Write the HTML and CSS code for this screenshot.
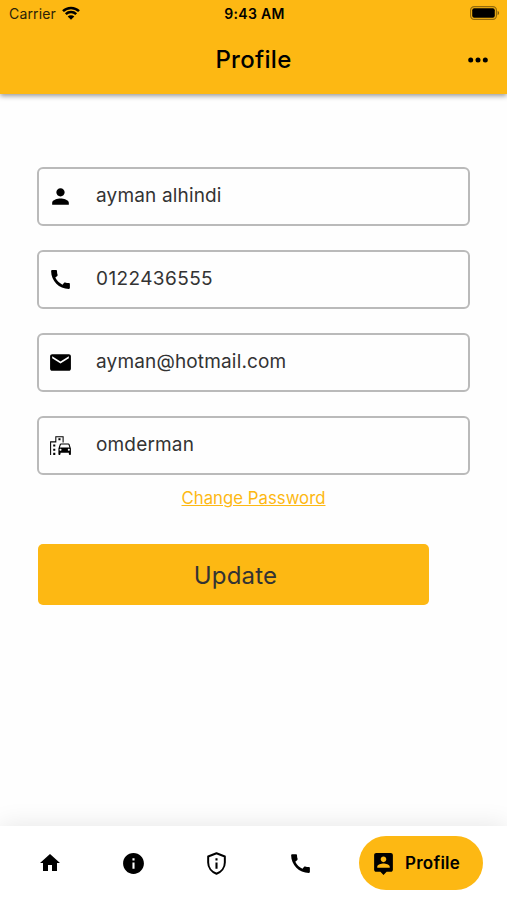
FILE: index.html
```html
<!DOCTYPE html>
<html lang="en">
<head>
    <meta charset="utf-8"/>
    <title>Profile</title>
    <meta name="viewport" content="width=device-width, initial-scale=1.0"/>
    <link rel="stylesheet" href="styles.css">
</head>

<body>
<header class="header">
    <div class="status">
        <div class="carrier">
            <span>Carrier</span>
            <svg class="wifi" viewBox="0 0 18 14">
                <path d="M1 5.2a11.4 11.4 0 0 1 16 0M3.8 8.1a7.4 7.4 0 0 1 10.4 0" fill="none" stroke="#000" stroke-width="2.5"/>
                <path d="M9 13.8L5.7 10.5a4.7 4.7 0 0 1 6.6 0z"/>
            </svg>
        </div>
        <span class="time">9:43 AM</span>
        <svg class="battery" viewBox="0 0 30 14">
            <rect x=".6" y=".6" width="25.8" height="12.8" rx="3.6" fill="none" stroke="#000" stroke-opacity=".42" stroke-width="1.2"/>
            <rect x="2.2" y="2.2" width="22.6" height="9.6" rx="2"/>
            <path d="M27.6 4.8c2 .8 2 3.6 0 4.4z" fill-opacity=".5"/>
        </svg>
    </div>
    <div class="titlebar">
        <h1>Profile</h1>
        <svg class="more" viewBox="0 0 20 6">
            <circle cx="2.7" cy="3" r="2.5"/>
            <circle cx="10" cy="3" r="2.5"/>
            <circle cx="17.3" cy="3" r="2.5"/>
        </svg>
    </div>
</header>

<main class="content">
    <div class="field">
        <svg class="icon" viewBox="0 0 24 24"><path d="M12 12c2.21 0 4-1.79 4-4s-1.79-4-4-4-4 1.79-4 4 1.79 4 4 4zm0 2c-2.67 0-8 1.34-8 4v2h16v-2c0-2.66-5.33-4-8-4z"/></svg>
        <span class="name">ayman alhindi</span>
    </div>
    <div class="field">
        <svg class="icon" viewBox="0 0 24 24"><path d="M20.01 15.38c-1.23 0-2.42-.2-3.53-.56-.35-.12-.74-.03-1.01.24l-1.57 1.97c-2.83-1.35-5.48-3.9-6.89-6.83l1.95-1.66c.27-.28.35-.67.24-1.02-.37-1.11-.56-2.3-.56-3.53 0-.54-.45-.99-.99-.99H4.19C3.65 3 3 3.24 3 3.99 3 13.28 10.73 21 20.01 21c.71 0 .99-.63.99-1.18v-3.45c0-.54-.45-.99-.99-.99z"/></svg>
        <span class="phone">0122436555</span>
    </div>
    <div class="field">
        <svg class="icon" viewBox="0 0 24 24"><path d="M20 4H4c-1.1 0-2 .9-2 2v12c0 1.1.9 2 2 2h16c1.1 0 2-.9 2-2V6c0-1.1-.9-2-2-2zm0 4l-8 5-8-5V6l8 5 8-5v2z"/></svg>
        <span class="email">ayman@hotmail.com</span>
    </div>
    <div class="field">
        <svg class="icon" viewBox="0 0 24 24">
            <path d="M20.57 10.66C20.43 10.26 20.05 10 19.6 10h-7.19c-.46 0-.83.26-.98.66L10 14.77l.01 5.51c0 .38.31.72.69.72h.62c.38 0 .68-.38.68-.76V19h8v1.24c0 .38.31.76.69.76h.61c.38 0 .69-.34.69-.72l.01-1.37v-4.14l-1.43-4.11zM12.41 11h7.19l1.03 3h-9.25l1.03-3zM12 17c-.55 0-1-.45-1-1s.45-1 1-1 1 .45 1 1-.45 1-1 1zm8 0c-.55 0-1-.45-1-1s.45-1 1-1 1 .45 1 1-.45 1-1 1z"/>
            <path d="M14 9h1V3H7v5H2v13h1V9h5V4h6zM5 11h2v2H5zM10 5h2v2h-2zM5 15h2v2H5zM5 19h2v2H5z"/>
        </svg>
        <span class="city">omderman</span>
    </div>
    <a class="change" href="#">Change Password</a>
    <button class="btn">Update</button>
</main>

<nav class="bottomnav">
    <a href="#"><svg class="home" viewBox="0 0 24 24"><path d="M10 20v-6h4v6h5v-8h3L12 3 2 12h3v8z"/></svg></a>
    <a href="#"><svg class="icon" viewBox="0 0 24 24"><path d="M12 2C6.48 2 2 6.48 2 12s4.48 10 10 10 10-4.48 10-10S17.52 2 12 2zm1 15h-2v-6h2v6zm0-8h-2V7h2v2z"/></svg></a>
    <a href="#"><svg class="icon" viewBox="0 0 24 24">
        <path d="M12 2.2L4 5.3V11c0 5 3.4 9.2 8 10.8 4.600-1.600 8-5.800 8-10.800V5.300z" fill="none" stroke="#000" stroke-width="1.9" stroke-linejoin="round"/>
        <path d="M11 11h2v6h-2zM11 7h2v2h-2z"/>
    </svg></a>
    <a href="#"><svg class="icon" viewBox="0 0 24 24"><path d="M20.01 15.38c-1.23 0-2.42-.2-3.53-.56-.35-.12-.74-.03-1.01.24l-1.57 1.97c-2.83-1.35-5.48-3.9-6.89-6.83l1.95-1.66c.27-.28.35-.67.24-1.02-.37-1.11-.56-2.3-.56-3.53 0-.54-.45-.99-.99-.99H4.19C3.65 3 3 3.24 3 3.99 3 13.28 10.73 21 20.01 21c.71 0 .99-.63.99-1.18v-3.45c0-.54-.45-.99-.99-.99z"/></svg></a>
    <a class="active" href="#">
        <svg class="icon" viewBox="0 0 24 24"><path d="M19 2H5c-1.11 0-2 .9-2 2v14c0 1.1.89 2 2 2h4l3 3 3-3h4c1.1 0 2-.9 2-2V4c0-1.1-.9-2-2-2zm-7 3.3c1.49 0 2.7 1.21 2.7 2.7 0 1.49-1.21 2.7-2.7 2.7-1.49 0-2.7-1.21-2.7-2.7 0-1.49 1.21-2.7 2.7-2.7zM18 16H6v-.9c0-2 4-3.1 6-3.1s6 1.1 6 3.1v.9z"/></svg>
        <span>Profile</span>
    </a>
</nav>
</body>
</html>
```

FILE: styles.css
```css
* {
    box-sizing: border-box;
}

body {
    margin: 0;
    height: 900px;
    display: flex;
    flex-direction: column;
    font-family: Inter, "Liberation Sans", sans-serif;
    background: #fefefe;
    color: #000;
    overflow: hidden;
}

svg {
    display: block;
    flex: none;
}

.header {
    height: 94px;
    background: #fdb813;
    box-shadow: 0 2px 5px rgba(0, 0, 0, 0.4);
}

.status {
    display: grid;
    grid-template-columns: 1fr auto 1fr;
    align-items: center;
    height: 27px;
    padding: 0 7px 0 9px;
    font-size: 14px;
}

.carrier {
    display: flex;
    align-items: center;
    gap: 6px;
    color: #2b2208;
    letter-spacing: 0.15px;
}

.wifi {
    width: 18px;
    height: 14px;
    margin-top: -2px;
}

.time {
    font-weight: 600;
    letter-spacing: 0.35px;
}

.battery {
    width: 30px;
    height: 14px;
    margin-top: -1px;
    justify-self: end;
}

.titlebar {
    display: grid;
    grid-template-columns: 1fr auto 1fr;
    align-items: center;
    height: 65px;
    padding: 0 19px;
}

.titlebar h1 {
    grid-column: 2;
    margin: 0;
    font-size: 24px;
    font-weight: 500;
    letter-spacing: 0.3px;
}

.more {
    width: 20px;
    height: 6px;
    justify-self: end;
}

.content {
    flex: 1;
    display: flex;
    flex-direction: column;
    padding: 73px 37px 0;
}

.field {
    display: flex;
    align-items: center;
    gap: 23px;
    height: 59px;
    margin-bottom: 24px;
    padding: 0 9px;
    border: 2px solid #bababa;
    border-radius: 6px;
    font-size: 19px;
    letter-spacing: 0.16px;
    color: #333;
}

.icon {
    width: 25px;
    height: 25px;
}

.field span {
    margin-top: -2px;
}

.field .phone {
    letter-spacing: 0.4px;
}

.change {
    align-self: center;
    margin-top: -12px;
    font-size: 16.8px;
    line-height: 22px;
    color: #fdb813;
}

.btn {
    width: 391px;
    height: 61px;
    margin-top: 35px;
    margin-left: 1px;
    padding: 2px 0 0 4px;
    border: none;
    border-radius: 5px;
    background: #fdb813;
    font-family: inherit;
    font-size: 24px;
    letter-spacing: 0.2px;
    color: #333;
    cursor: pointer;
}

.bottomnav {
    display: flex;
    align-items: center;
    height: 74px;
    padding: 0 24px 0 8px;
    background: #fff;
    box-shadow: 0 0 26px rgba(0, 0, 0, 0.1);
}

.bottomnav a {
    display: flex;
    align-items: center;
    justify-content: center;
    width: 83.5px;
    color: #000;
    text-decoration: none;
}

.home {
    width: 24px;
    height: 24px;
}

.bottomnav a.active {
    width: 124px;
    height: 54px;
    margin-left: auto;
    padding-left: 12px;
    justify-content: flex-start;
    gap: 9px;
    border-radius: 27px;
    background: #fdb813;
    font-size: 17px;
    font-weight: 600;
    letter-spacing: 0.25px;
}
```
